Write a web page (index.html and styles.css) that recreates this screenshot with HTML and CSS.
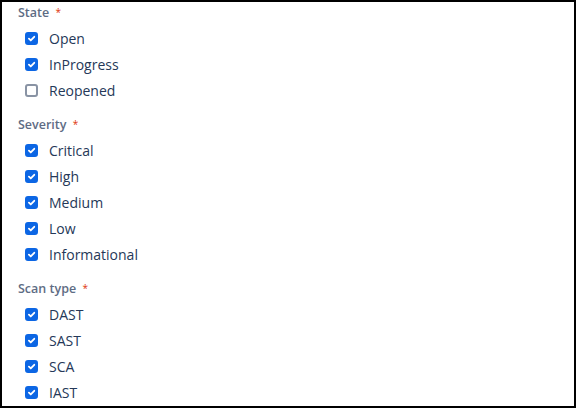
FILE: index.html
```html
<!DOCTYPE html>
<html>
<head>
<meta charset="utf-8">
<link rel="stylesheet" href="styles.css">
</head>
<body>
<div class="frame">
  <div class="group">
    <div class="label">State <span class="req">*</span></div>
    <label class="item"><span class="box on"><svg viewBox="0 0 12 12"><path d="M3.2 6.2l2 1.9 3.8-4"/></svg></span>Open</label>
    <label class="item"><span class="box on"><svg viewBox="0 0 12 12"><path d="M3.2 6.2l2 1.9 3.8-4"/></svg></span>InProgress</label>
    <label class="item"><span class="box"></span>Reopened</label>
  </div>
  <div class="group">
    <div class="label">Severity <span class="req">*</span></div>
    <label class="item"><span class="box on"><svg viewBox="0 0 12 12"><path d="M3.2 6.2l2 1.9 3.8-4"/></svg></span>Critical</label>
    <label class="item"><span class="box on"><svg viewBox="0 0 12 12"><path d="M3.2 6.2l2 1.9 3.8-4"/></svg></span>High</label>
    <label class="item"><span class="box on"><svg viewBox="0 0 12 12"><path d="M3.2 6.2l2 1.9 3.8-4"/></svg></span>Medium</label>
    <label class="item"><span class="box on"><svg viewBox="0 0 12 12"><path d="M3.2 6.2l2 1.9 3.8-4"/></svg></span>Low</label>
    <label class="item"><span class="box on"><svg viewBox="0 0 12 12"><path d="M3.2 6.2l2 1.9 3.8-4"/></svg></span>Informational</label>
  </div>
  <div class="group">
    <div class="label">Scan type <span class="req">*</span></div>
    <label class="item"><span class="box on"><svg viewBox="0 0 12 12"><path d="M3.2 6.2l2 1.9 3.8-4"/></svg></span>DAST</label>
    <label class="item"><span class="box on"><svg viewBox="0 0 12 12"><path d="M3.2 6.2l2 1.9 3.8-4"/></svg></span>SAST</label>
    <label class="item"><span class="box on"><svg viewBox="0 0 12 12"><path d="M3.2 6.2l2 1.9 3.8-4"/></svg></span>SCA</label>
    <label class="item"><span class="box on"><svg viewBox="0 0 12 12"><path d="M3.2 6.2l2 1.9 3.8-4"/></svg></span>IAST</label>
  </div>
</div>
</body>
</html>
```
FILE: styles.css
```css
html, body {
  margin: 0;
  padding: 0;
  background: #fff;
}
.frame {
  box-sizing: border-box;
  width: 576px;
  height: 408px;
  border: 2px solid #000;
  padding: 0 0 0 16px;
  font-family: "Open Sans", "Noto Sans", sans-serif;
  overflow: hidden;
}
.group {
  display: flex;
  flex-direction: column;
  margin-bottom: 11px;
}
.label {
  height: 20px;
  line-height: 20px;
  margin-bottom: 3px;
  font-size: 12.5px;
  font-weight: 600;
  color: #5e6c84;
}
.req {
  color: #de350b;
  font-size: 10px;
  font-weight: 400;
  margin-left: 3px;
  vertical-align: 1px;
}
.item {
  display: flex;
  align-items: center;
  height: 26px;
  font-size: 14px;
  color: #253858;
  padding-left: 7px;
}
.box {
  box-sizing: border-box;
  flex: 0 0 13px;
  width: 13px;
  height: 13px;
  border: 2px solid #8993a4;
  border-radius: 3px;
  margin-right: 11px;
  display: flex;
  align-items: center;
  justify-content: center;
}
.box.on {
  background: #0c66e4;
  border-color: #0c66e4;
}
.box svg {
  flex: 0 0 11px;
  width: 11px;
  height: 11px;
  fill: none;
  stroke: #fff;
  stroke-width: 2;
  stroke-linecap: round;
  stroke-linejoin: round;
}
```
